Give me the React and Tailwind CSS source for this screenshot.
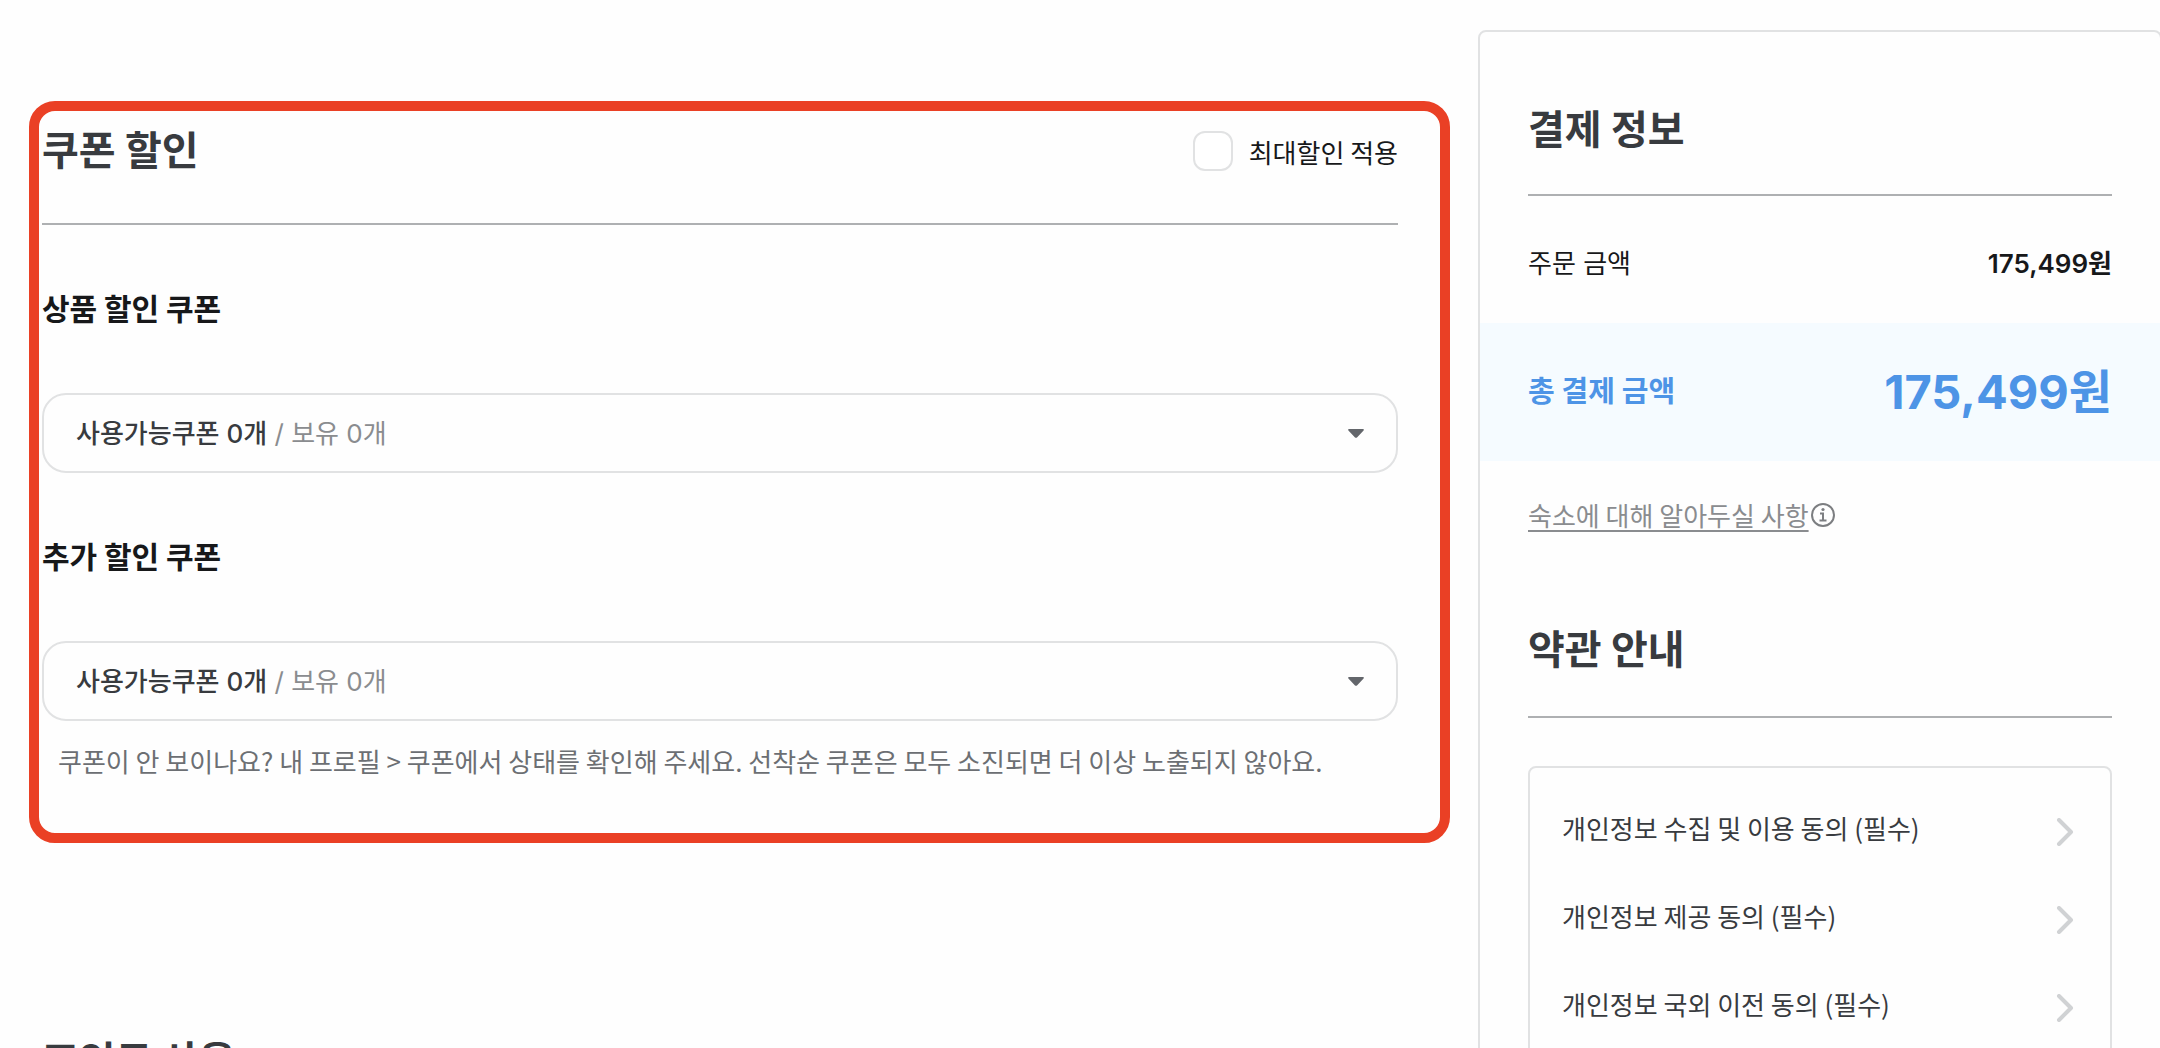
import { useState } from "react";

const terms = [
  "개인정보 수집 및 이용 동의 (필수)",
  "개인정보 제공 동의 (필수)",
  "개인정보 국외 이전 동의 (필수)",
];

function SectionTitle({ children }) {
  return (
    <h2 className="font-['Inter','Noto_Sans_CJK_KR',sans-serif] text-[40px] leading-[60px] font-bold text-[#383b3f]">
      {children}
    </h2>
  );
}

function CouponSelect({ id, title, usable, owned }) {
  return (
    <div>
      <label htmlFor={id} className="block text-[30px] leading-[44px] font-bold text-[#17181a]">
        {title}
      </label>
      <div className="relative mt-16">
        <select
          id={id}
          aria-describedby={`${id}-count`}
          className="block w-full h-20 appearance-none rounded-3xl border-2 border-[#e1e2e3] bg-transparent px-8"
        >
          <option value=""></option>
        </select>
        {/* Coupon count over the select */}
        <div className="pointer-events-none absolute inset-0 flex items-center justify-between px-[34px]">
          <p
            id={`${id}-count`}
            className="font-['Inter','Noto_Sans_CJK_KR',sans-serif] text-[26px] text-[#8a8c8f]"
          >
            <span className="font-medium text-[#383b3f]">사용가능쿠폰 {usable}개</span> / 보유 {owned}개
          </p>
          <svg width="16" height="9" viewBox="0 0 16 9" fill="#63666b" aria-hidden="true">
            <path d="M1 0h14c.8 0 1.200.9.600 1.500L9 8.400c-.6.600-1.400.6-2 0L.4 1.500C-.2.900.2 0 1 0z" />
          </svg>
        </div>
      </div>
    </div>
  );
}

export default function App() {
  const [maxDiscount, setMaxDiscount] = useState(false);

  return (
    <div className="flex h-screen items-start overflow-hidden bg-[#fefefe] font-['Noto_Sans_CJK_KR',sans-serif] text-[#17181a]">
      <main className="min-w-0 flex-1 pt-[101px] pr-7 pl-[29px]">
        {/* Coupons */}
        <section className="rounded-[26px] border-10 border-[#ea4025] pt-[10px] pr-[42px] pb-[52px] pl-[3px]">
          <div className="flex items-center justify-between border-b-2 border-[#aeb0b2] pb-[42px]">
            <SectionTitle>쿠폰 할인</SectionTitle>
            <label className="flex items-center gap-4 text-[26px]">
              <input
                type="checkbox"
                checked={maxDiscount}
                onChange={(e) => setMaxDiscount(e.target.checked)}
                className="size-10 appearance-none rounded-xl border-2 border-[#e1e2e3] bg-white checked:bg-[#4d94e6]"
              />
              최대할인 적용
            </label>
          </div>

          <div className="mt-[60px] flex flex-col gap-[60px]">
            <CouponSelect id="product-coupon" title="상품 할인 쿠폰" usable={0} owned={0} />
            <CouponSelect id="extra-coupon" title="추가 할인 쿠폰" usable={0} owned={0} />
          </div>
          <p className="mt-5 pl-4 text-[26px] leading-10 text-[#6c6f73]">
            쿠폰이 안 보이나요? 내 프로필 &gt; 쿠폰에서 상태를 확인해 주세요. 선착순 쿠폰은 모두 소진되면 더 이상 노출되지 않아요.
          </p>
        </section>

        {/* Points */}
        <section className="mt-[188px] pl-[13px]">
          <SectionTitle>포인트 사용</SectionTitle>
        </section>
      </main>

      <aside className="mt-[30px] -mr-0.5 w-[684px] shrink-0 rounded-lg border-2 border-[#e1e2e3]">
        {/* Payment summary */}
        <section className="pt-[68px]">
          <div className="mx-12 border-b-2 border-[#aeb0b2] pb-[34px]">
            <SectionTitle>결제 정보</SectionTitle>
          </div>
          <dl className="font-['Inter','Noto_Sans_CJK_KR',sans-serif]">
            <div className="flex items-center justify-between px-12 pt-[52px] pb-[43px] text-[26px] leading-8">
              <dt>주문 금액</dt>
              <dd className="font-semibold">175,499원</dd>
            </div>
            <div className="flex h-[138px] items-center justify-between bg-[#f5fbff] px-12 font-bold text-[#4d94e6]">
              <dt className="text-[29px]">총 결제 금액</dt>
              <dd className="text-[47px]">175,499원</dd>
            </div>
          </dl>
          <a href="#notice" className="mx-12 mt-[34px] flex items-center gap-0.5 text-[26px] leading-10 text-[#8a8c8f]">
            <span className="underline decoration-2 underline-offset-4">숙소에 대해 알아두실 사항</span>
            <svg width="24" height="24" viewBox="0 0 24 24" fill="none" stroke="#7c7e81" strokeWidth="2" aria-hidden="true">
              <circle cx="12" cy="12" r="11" />
              <path d="M9 10.500h3V17M8.500 17.500h7" />
              <circle cx="12" cy="6.500" r="1.600" fill="#7c7e81" stroke="none" />
            </svg>
          </a>
        </section>

        {/* Terms */}
        <section className="px-12 pt-[85px] pb-12">
          <div className="border-b-2 border-[#aeb0b2] pb-9">
            <SectionTitle>약관 안내</SectionTitle>
          </div>
          <ul className="mt-12 rounded-lg border-2 border-[#e1e2e3] py-5 text-[26px] text-[#383b3f]">
            {terms.map((term) => (
              <li key={term}>
                <button type="button" className="flex h-22 w-full items-center justify-between pr-9 pl-8 text-left">
                  <span className="pb-2.5">{term}</span>
                  <svg width="18" height="28" viewBox="0 0 18 28" fill="none" stroke="#d0d2d4" strokeWidth="4" strokeLinecap="round" strokeLinejoin="round" aria-hidden="true">
                    <path d="M3 2l12 12L3 26" />
                  </svg>
                </button>
              </li>
            ))}
          </ul>
        </section>
      </aside>
    </div>
  );
}
